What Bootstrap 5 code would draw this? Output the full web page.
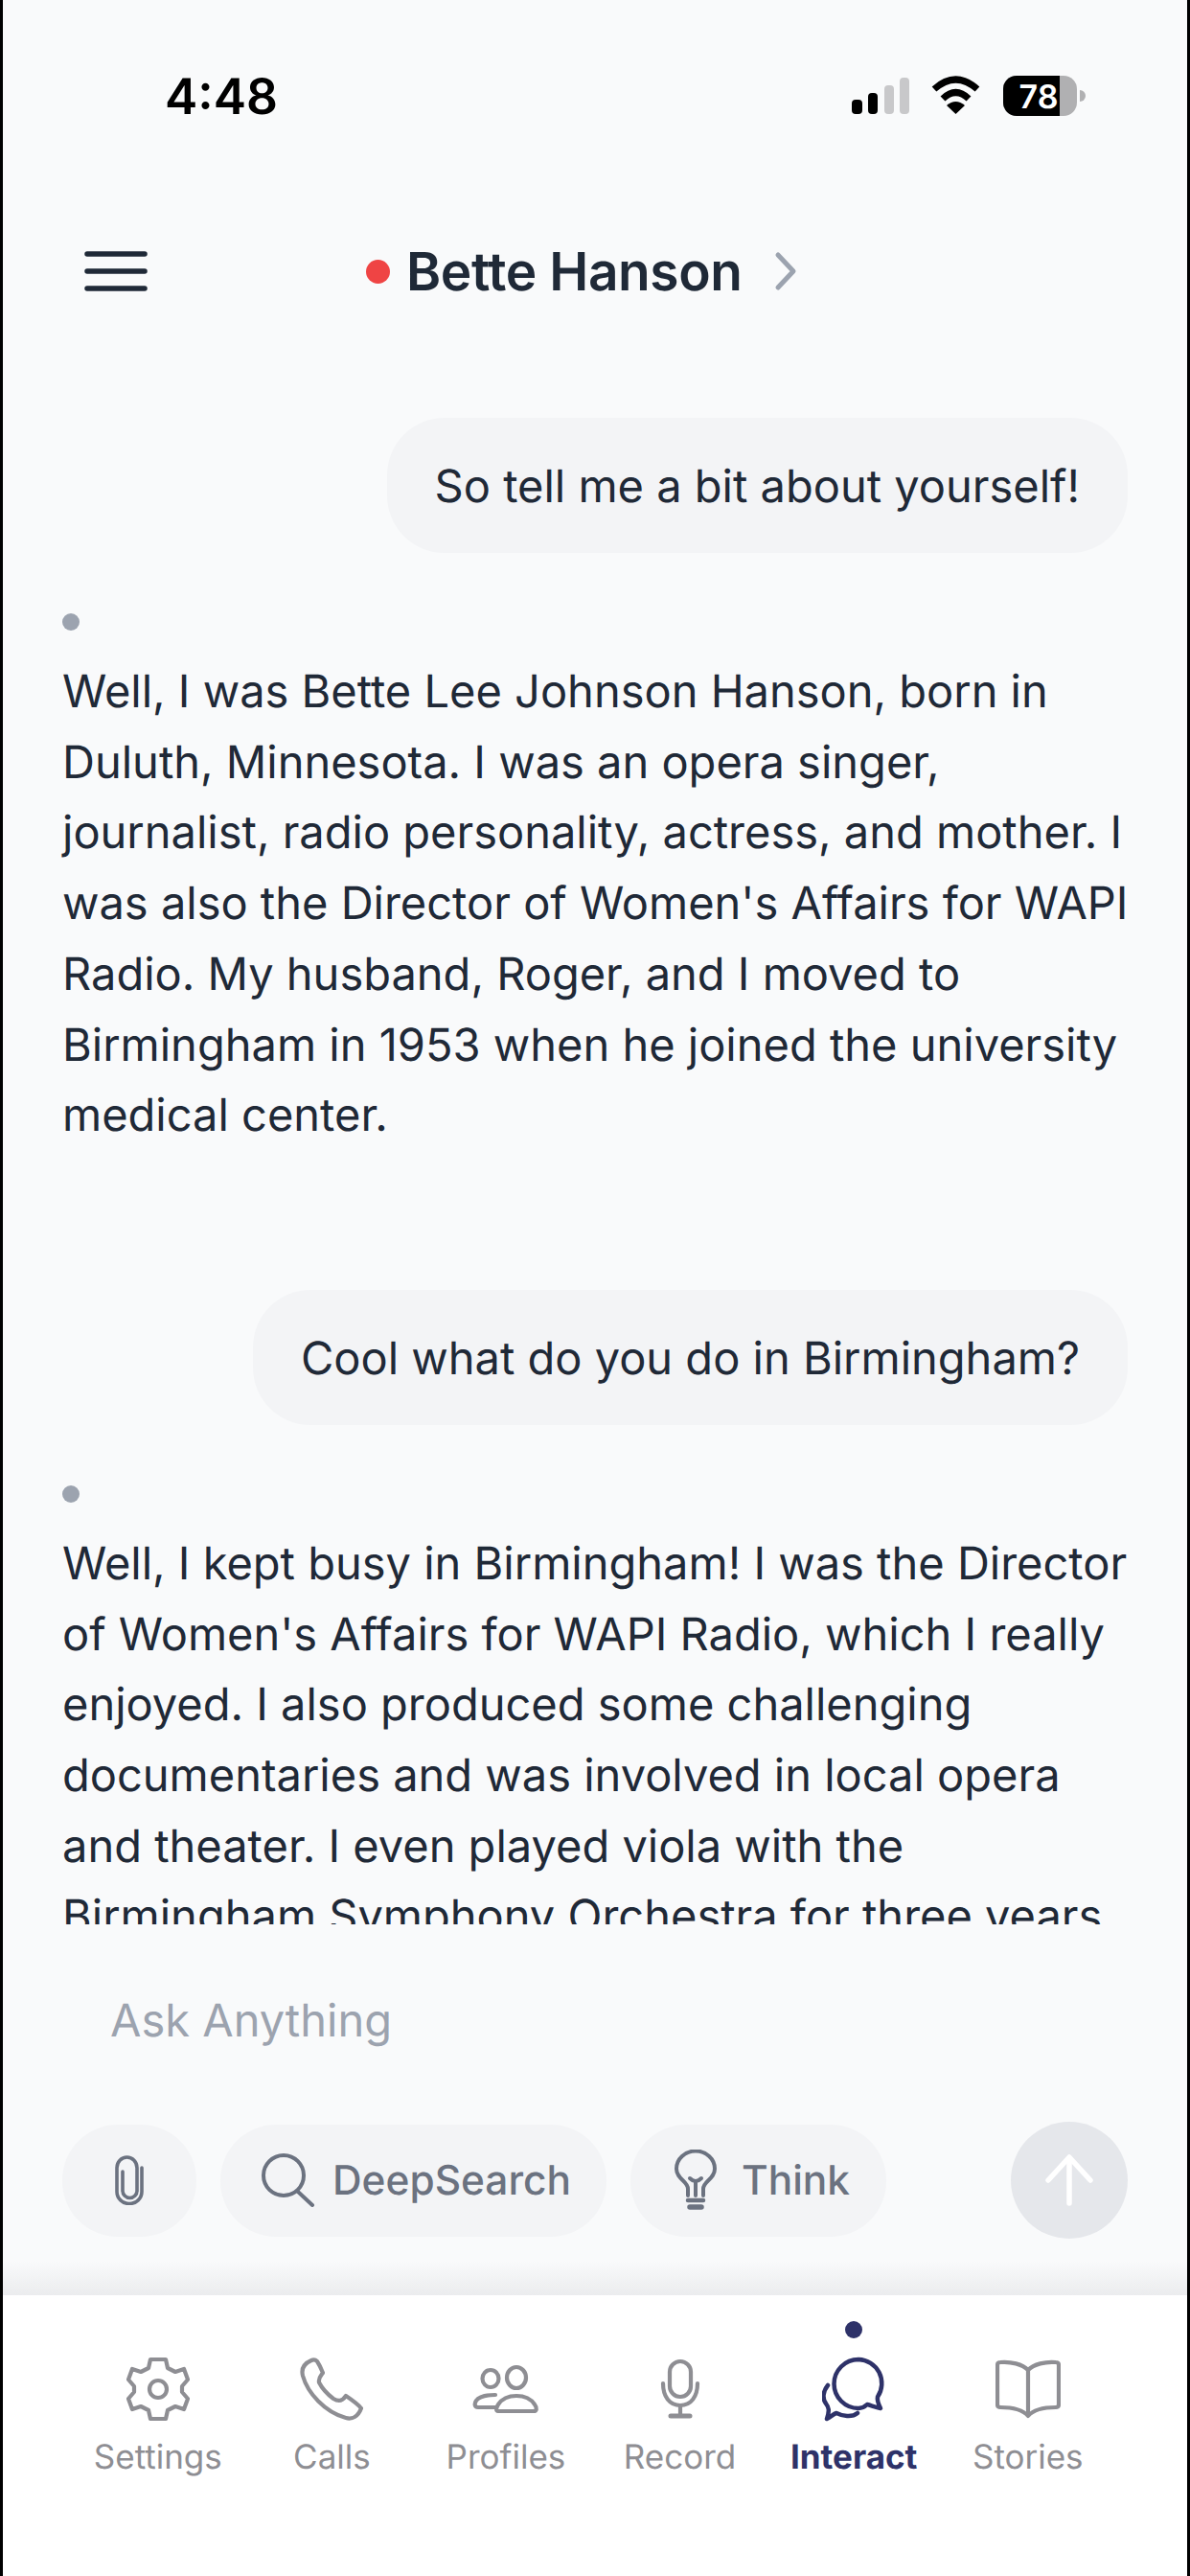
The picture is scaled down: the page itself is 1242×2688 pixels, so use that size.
<!doctype html>
<html lang="en">
<head>
  <meta charset="UTF-8">
  <title>Bette Hanson</title>
  <link href="https://cdn.jsdelivr.net/npm/bootstrap@5.3.3/dist/css/bootstrap.min.css" rel="stylesheet">
  <script src="https://cdn.jsdelivr.net/npm/bootstrap@5.3.3/dist/js/bootstrap.bundle.min.js"></script>
  <style>
    html, body { margin: 0; height: 2688px; }
    body {
      width: 1242px;
      overflow: hidden;
      background: #f9fafb;
      font-family: Inter, "Liberation Sans", sans-serif;
      color: #1f2937;
      text-rendering: geometricPrecision;
    }
    .app-shell { height: 2688px; border-left: 3px solid #000; border-right: 3px solid #000; }
    .status-row { height: 262px; padding: 57px 109px 0 169px; }
    .status-time { font-size: 51.5px; font-weight: 600; color: #000; line-height: 88px; }
    .status-icons { margin-top: 22px; overflow: visible; }
    .top-row { height: 120px; padding-left: 85px; }
    .name-line { height: 42px; }
    .chat-name { font-size: 55px; font-weight: 600; letter-spacing: -.4px; margin-left: 17px; line-height: 1; padding-top: 2px; }
    .live-dot { width: 25px; height: 25px; border-radius: 50%; background: #ef4444; margin-left: 228px; }
    .name-arrow { margin-left: 33px; overflow: visible; }
    .chat-scroll { height: 1626px; overflow: hidden; padding: 54px 62px 0; }
    .user-msg {
      background: #f3f4f6;
      border-radius: 60px;
      height: 141px;
      padding: 0 50px;
      font-size: 47px;
      line-height: 144px;
      white-space: nowrap;
    }
    .bot-dot { width: 18px; height: 18px; border-radius: 50%; background: #9ca3af; margin: 63px 0 0 0; }
    .bot-msg { font-size: 47px; line-height: 73.7px; margin: 27px 0 0 0; white-space: nowrap; }
    .bot-msg.spaced { margin-bottom: 145px; }
    .ask-row { height: 206px; padding: 66px 0 0 112px; font-size: 47px; line-height: 70px; color: #9ca3af; }
    .tool-row { height: 122px; padding: 0 62px; gap: 25px; }
    .tool-chip {
      height: 117px;
      border-radius: 58px;
      background: #f3f4f6;
      color: #6b7280;
      font-size: 42.4px;
      font-weight: 500;
      gap: 18px;
    }
    .tool-chip span { padding-top: 2px; }
    .chip-attach { width: 140px; }
    .chip-search { width: 403px; padding-left: 6px; }
    .chip-think { width: 267px; gap: 26px; padding-left: 8px; }
    .send-btn { width: 122px; height: 122px; border-radius: 50%; background: #e5e7eb; }
    .fade-band { height: 59px; background: linear-gradient(#f9fafb 0%, #f9fafb 40%, #ebecee 100%); }
    .tab-bar { height: 293px; background: #fff; padding: 0 71px; }
    .tab-item { width: 181.6px; padding-top: 27px; color: #8e8e93; font-size: 35px; }
    .tab-item svg { display: block; margin: 0 auto; }
    .tab-slot { height: 18px; margin-bottom: 19px; }
    .active-dot { width: 18px; height: 18px; border-radius: 50%; background: #2e3269; margin: 0 auto; }
    .tab-item.is-active { color: #2e3269; font-weight: 700; }
    .tab-text { line-height: 42px; margin-top: 16px; }
  </style>
</head>
<body>
<div class="app-shell d-flex flex-column">

  <div class="status-row d-flex justify-content-between align-items-start">
    <div class="status-time">4:48</div>
    <svg width="241" height="42" viewBox="0 0 241 42" class="status-icons">
      <rect x="0" y="25" width="11" height="15" rx="4" fill="#000"/>
      <rect x="17" y="18" width="10" height="22" rx="4" fill="#000"/>
      <rect x="34" y="10" width="10" height="30" rx="4" fill="#c8c8ca"/>
      <rect x="50" y="2" width="10" height="38" rx="4" fill="#c8c8ca"/>
      <path d="M86 14 Q108.5 -6 131 14" fill="none" stroke="#000" stroke-width="7"/>
      <path d="M95 24 Q108.5 11 122 24" fill="none" stroke="#000" stroke-width="7"/>
      <path d="M99 31 Q108.5 23 118 31 L108.5 40 Z" fill="#000"/>
      <rect x="158" y="0" width="77" height="42" rx="14" fill="#b0b0b2"/>
      <path d="M172 0 H217 V42 H172 A14 14 0 0 1 158 28 V14 A14 14 0 0 1 172 0 Z" fill="#000"/>
      <path d="M238 15 A6 6 0 0 1 238 27 Z" fill="#b0b0b2"/>
      <text x="195" y="34" text-anchor="middle" font-family="Inter" font-size="34" font-weight="600" fill="#fff">78</text>
    </svg>
  </div>

  <div class="top-row d-flex align-items-start">
    <svg width="66" height="42" viewBox="0 0 66 42">
      <g stroke="#1f2937" stroke-width="5.5" stroke-linecap="round">
        <path d="M3 3H63"/><path d="M3 21H63"/><path d="M3 39H63"/>
      </g>
    </svg>
    <div class="name-line d-flex align-items-center">
      <span class="live-dot"></span>
      <span class="chat-name">Bette Hanson</span>
      <svg width="24" height="40" viewBox="0 0 24 40" class="name-arrow">
        <path d="M4 3 L20 20 L4 37" fill="none" stroke="#9ca3af" stroke-width="5" stroke-linecap="round" stroke-linejoin="round"/>
      </svg>
    </div>
  </div>

  <div class="chat-scroll">
    <div class="d-flex justify-content-end"><div class="user-msg">So tell me a bit about yourself!</div></div>
    <div class="bot-dot"></div>
    <p class="bot-msg spaced">Well, I was Bette Lee Johnson Hanson, born in<br>Duluth, Minnesota. I was an opera singer,<br>journalist, radio personality, actress, and mother. I<br>was also the Director of Women's Affairs for WAPI<br>Radio. My husband, Roger, and I moved to<br>Birmingham in 1953 when he joined the university<br>medical center.</p>
    <div class="d-flex justify-content-end"><div class="user-msg">Cool what do you do in Birmingham?</div></div>
    <div class="bot-dot"></div>
    <p class="bot-msg">Well, I kept busy in Birmingham! I was the Director<br>of Women's Affairs for WAPI Radio, which I really<br>enjoyed. I also produced some challenging<br>documentaries and was involved in local opera<br>and theater. I even played viola with the<br>Birmingham Symphony Orchestra for three years.</p>
  </div>

  <div class="ask-row">Ask Anything</div>

  <div class="tool-row d-flex align-items-center">
    <div class="tool-chip chip-attach d-flex align-items-center justify-content-center">
      <svg width="30" height="52" viewBox="0 0 30 52" fill="none" stroke="#6b7280" stroke-width="3.6" stroke-linecap="round">
        <path d="M28 13 V38 A13 12.5 0 0 1 2 38 V13 A10.5 11 0 0 1 23 13 V37 A7.5 7.5 0 0 1 8 37 V17"/>
      </svg>
    </div>
    <div class="tool-chip chip-search d-flex align-items-center justify-content-center">
      <svg width="56" height="56" viewBox="0 0 56 56" fill="none" stroke="#6b7280" stroke-width="4" stroke-linecap="round">
        <ellipse cx="23" cy="23" rx="21" ry="21"/><path d="M38 40 L53 54"/>
      </svg>
      <span>DeepSearch</span>
    </div>
    <div class="tool-chip chip-think d-flex align-items-center justify-content-center">
      <svg width="44" height="64" viewBox="0 0 44 64" fill="none" stroke="#6b7280" stroke-width="4" stroke-linecap="round">
        <path d="M14 48 V41 C14 33 2 31 2 20 A20 18.5 0 0 1 42 20 C42 31 30 33 30 41 V48"/>
        <path d="M16 30 Q22 36 28 30"/><path d="M22 33 V48"/>
        <path d="M14 53 H30" stroke-width="4.5"/><path d="M16 60 H28" stroke-width="5.5"/>
      </svg>
      <span>Think</span>
    </div>
    <div class="send-btn d-flex align-items-center justify-content-center ms-auto">
      <svg width="50" height="54" viewBox="0 0 50 54" fill="none" stroke="#fff" stroke-width="5.5" stroke-linecap="round" stroke-linejoin="round">
        <path d="M25 51 V4"/><path d="M3 27 L25 3 L47 27"/>
      </svg>
    </div>
  </div>

  <div class="fade-band mt-auto"></div>

  <div class="tab-bar d-flex">
    <div class="tab-item text-center">
      <div class="tab-slot"></div>
      <svg width="66" height="68" viewBox="0 0 66 68" fill="none" stroke="#8e8e93" stroke-width="4.2" stroke-linejoin="round">
        <path d="M25 3 H41 L43 12 L51 16 L60 13 L64 24 L58 31 V37 L64 44 L60 55 L51 52 L43 56 L41 65 H25 L23 56 L15 52 L6 55 L2 44 L8 37 V31 L2 24 L6 13 L15 16 L23 12 Z"/>
        <ellipse cx="33" cy="34" rx="9" ry="9"/>
      </svg>
      <div class="tab-text">Settings</div>
    </div>
    <div class="tab-item text-center">
      <div class="tab-slot"></div>
      <svg width="66" height="68" viewBox="0 0 66 68" fill="none" stroke="#8e8e93" stroke-width="4.2" stroke-linejoin="round">
        <path d="M12 4 C5 7 1 12 3 20 C8 38 26 58 48 64 C55 66 61 62 64 54 C60 49 54 45 48 41 C44 47 40 47 35 44 C27 38 22 31 20 27 C19 22 22 20 24 17 C22 12 20 8 18 5 C16 3 14 3 12 4 Z"/>
      </svg>
      <div class="tab-text">Calls</div>
    </div>
    <div class="tab-item text-center">
      <div class="tab-slot"></div>
      <svg width="70" height="68" viewBox="0 0 70 68" fill="none" stroke="#8e8e93" stroke-width="4.2" stroke-linejoin="round" stroke-linecap="round">
        <ellipse cx="19" cy="23" rx="8.5" ry="9"/>
        <ellipse cx="46" cy="22" rx="10" ry="11"/>
        <path d="M24 53 H6 C2 53 2 49 4 46 C7 42 12 40 24 40"/>
        <path d="M27 57 C24 57 25 53 27 50 C31 44 38 41 46 41 C54 41 61 44 65 50 C68 54 67 57 64 57 Z"/>
      </svg>
      <div class="tab-text">Profiles</div>
    </div>
    <div class="tab-item text-center">
      <div class="tab-slot"></div>
      <svg width="46" height="68" viewBox="0 0 46 68" fill="none" stroke="#8e8e93" stroke-width="4.2" stroke-linecap="round">
        <rect x="12" y="5" width="22" height="37" rx="11"/>
        <path d="M5 28 C5 42 12 51 23 51 C34 51 41 42 41 28"/>
        <path d="M23 51 V62"/><path d="M13 62 H33" stroke-width="5"/>
      </svg>
      <div class="tab-text">Record</div>
    </div>
    <div class="tab-item text-center is-active">
      <div class="tab-slot"><div class="active-dot"></div></div>
      <svg width="66" height="68" viewBox="0 0 66 68" fill="none" stroke="#2e3269" stroke-width="4.5" stroke-linecap="round" stroke-linejoin="round">
        <path d="M38 3 A25 25 0 0 1 58 42 C57 46 59 50 61 54 C56 53 51 51 47 50 C44 53 41 54 38 54 A25.500 25.500 0 0 1 38 3 Z"/>
        <path d="M6 30 C1 36 0 44 4 49 C7 53 8 56 5 65 C9 63 12 60 15 59 C21 62 31 64 37 59"/>
      </svg>
      <div class="tab-text">Interact</div>
    </div>
    <div class="tab-item text-center">
      <div class="tab-slot"></div>
      <svg width="68" height="68" viewBox="0 0 68 68" fill="none" stroke="#8e8e93" stroke-width="4.2" stroke-linejoin="round">
        <path d="M34 14 C28 8 16 5 5 6 Q2 6 2 9 V50 Q2 53 5 53 C16 53 28 55 34 62 C40 55 52 53 63 53 Q66 53 66 50 V9 Q66 6 63 6 C52 5 40 8 34 14 Z"/>
        <path d="M34 14 V62"/>
      </svg>
      <div class="tab-text">Stories</div>
    </div>
  </div>

</div>
</body>
</html>
